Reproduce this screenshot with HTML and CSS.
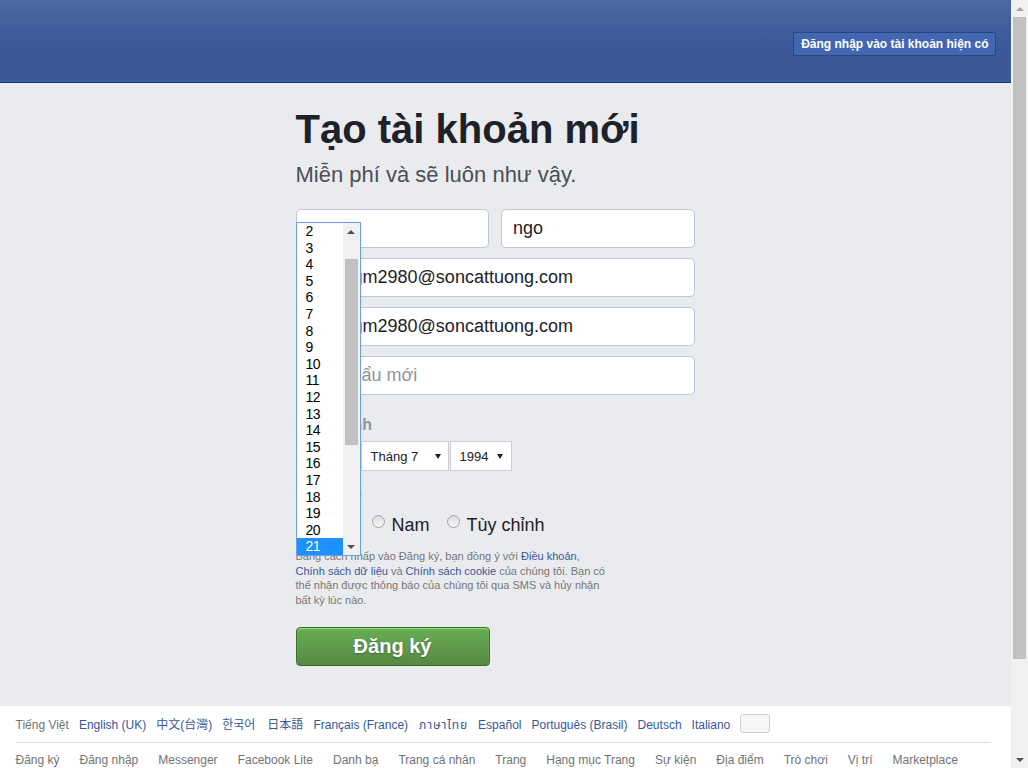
FILE: index.html
```html
<!DOCTYPE html>
<html lang="vi">
<head>
<meta charset="utf-8">
<title>Facebook - Đăng nhập hoặc đăng ký</title>
<link rel="stylesheet" href="styles.css">
</head>
<body>
<div class="viewport">
  <div class="page">
    <header class="topbar">
      <div class="topbar-inner">
        <a class="login-btn" href="#">Đăng nhập vào tài khoản hiện có</a>
      </div>
    </header>

    <main class="main">
      <div class="main-inner">
        <div class="form">
          <h1 class="title">Tạo tài khoản mới</h1>
          <p class="subtitle">Miễn phí và sẽ luôn như vậy.</p>

          <div class="fields">
            <div class="name-row">
              <div class="input"><span class="val"></span></div>
              <div class="input"><span class="val">ngo</span></div>
            </div>
            <div class="input"><span class="val">thuongm2980@soncattuong.com</span></div>
            <div class="input"><span class="val">thuongm2980@soncattuong.com</span></div>
            <div class="input"><span class="placeholder">Mật khẩu mới</span></div>
          </div>

          <div class="label">Ngày sinh</div>
          <div class="selects">
            <div class="select day">21<span class="caret"></span></div>
            <div class="select month">Tháng 7<span class="caret"></span></div>
            <div class="select year">1994<span class="caret"></span></div>
          </div>

          <div class="label gender-label">Giới tính</div>
          <div class="radios">
            <label class="option"><span class="radio"></span><span>Nữ</span></label>
            <label class="option"><span class="radio"></span><span>Nam</span></label>
            <label class="option"><span class="radio"></span><span>Tùy chỉnh</span></label>
          </div>

          <p class="terms">Bằng cách nhấp vào Đăng ký, bạn đồng ý với <a href="#">Điều khoản</a>, <a href="#">Chính sách dữ liệu</a> và <a href="#">Chính sách cookie</a> của chúng tôi. Bạn có thể nhận được thông báo của chúng tôi qua SMS và hủy nhận bất kỳ lúc nào.</p>

          <button class="signup" type="button">Đăng ký</button>

          <div class="dropdown">
            <ul class="options">
              <li>2</li><li>3</li><li>4</li><li>5</li><li>6</li>
              <li>7</li><li>8</li><li>9</li><li>10</li><li>11</li>
              <li>12</li><li>13</li><li>14</li><li>15</li><li>16</li>
              <li>17</li><li>18</li><li>19</li><li>20</li><li class="selected">21</li>
            </ul>
            <div class="dd-scroll">
              <span class="arrow-up dark"></span>
              <div class="dd-track"><div class="dd-thumb"></div></div>
              <span class="arrow-down dark"></span>
            </div>
          </div>
        </div>
      </div>
    </main>

    <footer class="footer">
      <div class="footer-inner">
        <ul class="langs">
          <li class="current">Tiếng Việt</li>
          <li><a href="#">English (UK)</a></li>
          <li><a href="#" class="tc">中文(台灣)</a></li>
          <li><a href="#" class="kr">한국어</a></li>
          <li class="jp-item"><a href="#" class="jp">日本語</a></li>
          <li><a href="#">Français (France)</a></li>
          <li><a href="#" class="th">ภาษาไทย</a></li>
          <li><a href="#">Español</a></li>
          <li><a href="#">Português (Brasil)</a></li>
          <li><a href="#">Deutsch</a></li>
          <li><a href="#">Italiano</a></li>
          <li><span class="more-btn"></span></li>
        </ul>
        <ul class="links">
          <li>Đăng ký</li>
          <li>Đăng nhập</li>
          <li>Messenger</li>
          <li>Facebook Lite</li>
          <li>Danh bạ</li>
          <li>Trang cá nhân</li>
          <li>Trang</li>
          <li>Hạng mục Trang</li>
          <li>Sự kiện</li>
          <li>Địa điểm</li>
          <li>Trò chơi</li>
          <li>Vị trí</li>
          <li>Marketplace</li>
        </ul>
      </div>
    </footer>
  </div>

  <div class="scrollbar">
    <span class="arrow-up light"></span>
    <div class="track"><div class="thumb"></div></div>
    <span class="arrow-down dark"></span>
  </div>
</div>
</body>
</html>
```

FILE: styles.css
```css
* { box-sizing: border-box; }

html, body {
  margin: 0;
  padding: 0;
}

body {
  width: 1028px;
  height: 768px;
  overflow: hidden;
  font-family: "Liberation Sans", Arial, sans-serif;
  background: #e9ebee;
  color: #1d2129;
}

a { text-decoration: none; color: inherit; }

ul { list-style: none; margin: 0; padding: 0; }

.viewport {
  display: flex;
  width: 1028px;
  height: 768px;
}

.page {
  width: 1011px;
  height: 768px;
  display: flex;
  flex-direction: column;
  overflow: hidden;
  background: #e9ebee;
}

/* ---------- header ---------- */
.topbar {
  flex: none;
  height: 83px;
  background: linear-gradient(to bottom, #4e69a2 0, #3b5998 50%, #3b5998 100%);
  border-bottom: 1px solid #133783;
}

.topbar-inner {
  width: 980px;
  margin: 0 auto;
  padding-top: 32px;
  display: flex;
  justify-content: flex-end;
}

.login-btn {
  display: block;
  height: 24px;
  line-height: 22px;
  padding: 0 6px 0 7px;
  background: #4267b2;
  border: 1px solid #29487d;
  border-radius: 2px;
  color: #fff;
  font-size: 12px;
  font-weight: bold;
  white-space: nowrap;
}

/* ---------- main ---------- */
.main {
  flex: none;
  height: 623px;
}

.main-inner {
  width: 980px;
  margin: 0 auto;
  padding-left: 280px;
  padding-top: 22px;
}

.form {
  position: relative;
  width: 399px;
}

.title {
  margin: 0;
  font-size: 40px;
  line-height: 48px;
  font-weight: bold;
  color: #1d2129;
  white-space: nowrap;
}

.subtitle {
  margin: 9px 0 0;
  font-size: 22px;
  line-height: 26px;
  color: #4b4f56;
}

.fields {
  margin-top: 21px;
  display: flex;
  flex-direction: column;
  gap: 10px;
}

.name-row {
  display: flex;
  gap: 12px;
}

.name-row .input { flex: 1; }

.input {
  height: 39px;
  background: #fff;
  border: 1px solid #bdc7d8;
  border-radius: 5px;
  padding: 0 11px;
  display: flex;
  align-items: center;
  font-size: 18px;
  color: #1d2129;
  white-space: nowrap;
  overflow: hidden;
}

.placeholder { color: #90949c; }

.label {
  margin-top: 20px;
  height: 20px;
  line-height: 20px;
  font-size: 16px;
  font-weight: bold;
  color: #90949c;
}

.selects {
  margin-top: 6px;
  display: flex;
  gap: 1px;
}

.select {
  position: relative;
  height: 30px;
  line-height: 30px;
  padding-left: 9px;
  background: #fff;
  border: 1px solid #ccd0d5;
  font-size: 13px;
  color: #1d2129;
}

.select.day { width: 64px; }
.select.month { width: 88px; }
.select.year { width: 62px; }

.caret {
  position: absolute;
  top: 12px;
  right: 7px;
  width: 0;
  height: 0;
  border-left: 3px solid transparent;
  border-right: 3px solid transparent;
  border-top: 5px solid #1d2129;
}

.select.year .caret { right: 8px; }

.gender-label { margin-top: 11px; }

.radios {
  margin-top: 12px;
  height: 22px;
  display: flex;
  gap: 17px;
  padding-left: 14px;
}

.option {
  display: flex;
  align-items: flex-start;
  font-size: 18px;
  line-height: 22px;
  color: #1d2129;
}

.radio {
  width: 13px;
  height: 13px;
  margin-top: 1px;
  margin-right: 7px;
  border: 1px solid #a5a5a5;
  border-radius: 50%;
  background: linear-gradient(to bottom, #dcdcdc, #f7f7f7);
}

.terms {
  margin: 13px 0 0;
  width: 312px;
  font-size: 11px;
  line-height: 14.6px;
  color: #777;
}

.terms a { color: #385898; }

.signup {
  display: block;
  margin-top: 20px;
  width: 194px;
  height: 39px;
  padding: 0;
  border: 1px solid #3b6e22;
  border-radius: 4px;
  background: linear-gradient(to bottom, #67ae55, #578843);
  box-shadow: inset 0 1px 1px #a4e388;
  color: #fff;
  font-family: "Liberation Sans", Arial, sans-serif;
  font-size: 20px;
  font-weight: bold;
  text-shadow: 0 1px 2px rgba(0, 0, 0, .3);
}

/* open day dropdown (overlays the form) */
.dropdown {
  position: absolute;
  left: 0;
  top: 117px;
  width: 65px;
  height: 334px;
  background: #fff;
  border: 1px solid #6f9ce6;
  display: flex;
}

.options {
  flex: 1;
  font-size: 14px;
  letter-spacing: -0.6px;
  color: #000;
}

.options li {
  height: 16.6px;
  line-height: 16.6px;
  padding-left: 9px;
}

.options li.selected {
  background: #1e90ff;
  color: #fff;
}

.dd-scroll {
  width: 17px;
  background: #f1f1f1;
  display: flex;
  flex-direction: column;
  align-items: center;
}

.dd-track {
  flex: 1;
  width: 100%;
  padding: 0 2px;
}

.dd-thumb {
  margin-top: 19px;
  height: 186px;
  background: #c1c1c1;
}

.arrow-up, .arrow-down {
  flex: none;
  display: block;
  width: 0;
  height: 0;
  border-left: 4px solid transparent;
  border-right: 4px solid transparent;
}

.arrow-up { margin: 7px 0 6px; border-bottom: 4px solid #505050; }
.arrow-down { margin: 5px 0 6px; border-top: 4px solid #505050; }
.arrow-up.light { border-bottom-color: #a3a3a3; }

/* ---------- footer ---------- */
.footer {
  flex: 1;
  background: #fff;
}

.footer-inner {
  width: 980px;
  margin: 0 auto;
  font-size: 12px;
  line-height: 15px;
}

.langs {
  width: 975px;
  padding: 8px 0 9px;
  border-bottom: 1px solid #dddfe2;
  display: flex;
  align-items: flex-start;
  gap: 10px;
  white-space: nowrap;
}

.langs li { margin-top: 4px; }
.langs a { color: #365899; }
.langs .current { color: #737373; }

.tc { font-family: "Liberation Sans", "Noto Sans CJK TC", sans-serif; }
.kr { font-family: "Liberation Sans", "Noto Sans CJK KR", sans-serif; }
.jp { font-family: "Liberation Sans", "Noto Sans CJK JP", sans-serif; }
.th {
  font-family: "Liberation Sans", "Noto Sans Thai", "DejaVu Sans", sans-serif;
  letter-spacing: 0.9px;
}

.langs .jp-item { margin-left: 2px; }
.langs .th { margin-left: 1px; }

.langs li:last-child { margin-top: 0; margin-left: 0; }

.more-btn {
  display: block;
  width: 30px;
  height: 19px;
  background: #f5f6f7;
  border: 1px solid #ccd0d5;
  border-radius: 3px;
}

.links {
  padding-top: 10px;
  display: flex;
  gap: 20px;
  color: #737373;
  white-space: nowrap;
}

/* ---------- page scrollbar ---------- */
.scrollbar {
  width: 17px;
  height: 768px;
  background: #f1f1f1;
  display: flex;
  flex-direction: column;
  align-items: center;
}

.scrollbar .arrow-up { margin: 7px 0 6px; }

.track {
  flex: 1;
  width: 100%;
  padding: 0 2px;
}

.thumb {
  height: 642px;
  background: #c1c1c1;
}
```
